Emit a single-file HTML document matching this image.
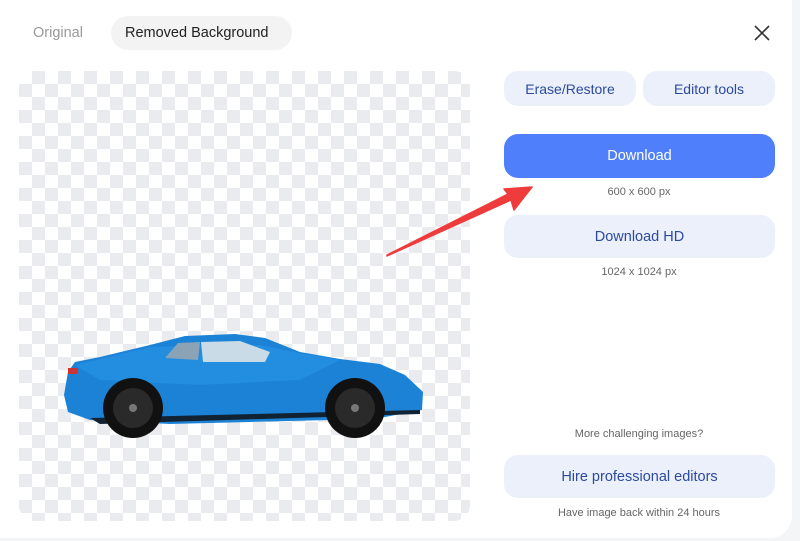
<!DOCTYPE html>
<html><head><style>
*{margin:0;padding:0;box-sizing:border-box}
body{width:800px;height:541px;background:#f4f5f7;font-family:"Liberation Sans",sans-serif;position:relative;overflow:hidden}
.card{position:absolute;left:0;top:0;width:792px;height:538px;background:#fff;border-radius:0 0 22px 0}
.t{position:absolute;font-size:14px}
.img{position:absolute;left:19px;top:71px;width:451px;height:450px;border-radius:16px;overflow:hidden;
background-color:#fff;background-image:linear-gradient(45deg,#e9ebee 25%,transparent 25%,transparent 75%,#e9ebee 75%),linear-gradient(45deg,#e9ebee 25%,transparent 25%,transparent 75%,#e9ebee 75%);background-size:26px 26px;background-position:0 0,13px 13px}
.btn{position:absolute;border-radius:14px;background:#ecf0fb;color:#2b4aa0;font-size:14px;display:flex;align-items:center;justify-content:center}
.s{position:absolute;font-size:11px;color:#666;text-align:center;width:270px;left:504px}
</style></head><body>
<div class="card"></div>
<div class="t" style="left:33px;top:25px;color:#999;font-size:14.5px">Original</div>
<div style="position:absolute;left:111px;top:16px;width:181px;height:34px;border-radius:17px;background:#f3f3f3"></div>
<div class="t" style="left:125px;top:25px;color:#222;font-size:14.5px">Removed Background</div>
<svg style="position:absolute;left:754px;top:25px" width="16" height="16"><path d="M1 1L15 15M15 1L1 15" stroke="#333" stroke-width="1.6"/></svg>
<div class="img">
<svg width="451" height="450" style="position:absolute;left:0;top:0">
<g transform="translate(-19,-71)">
<path d="M68 372 L75 362 L100 357 L150 345 L185 336 L235 334 L265 338 L300 352 L340 359 L380 364 L405 375 L423 392 L422 410 L380 418 L330 420 L170 424 L90 420 L68 412 L64 395Z" fill="#1b82d6"/>
<path d="M75 365 L150 347 L200 345 L260 345 L300 353 L340 360 L300 380 L200 385 L100 380Z" fill="#2a95e6" opacity=".6"/>
<path d="M165 358 L178 343 L200 342 L198 360Z" fill="#8aa3b5"/>
<path d="M201 342 L240 341 L270 352 L265 362 L203 362Z" fill="#c9dbe6"/>
<path d="M90 418 L420 410 L420 414 L100 424Z" fill="#123"/>
<circle cx="133" cy="408" r="30" fill="#111"/><circle cx="133" cy="408" r="20" fill="#2a2a2a"/><circle cx="133" cy="408" r="4" fill="#777"/>
<circle cx="355" cy="408" r="30" fill="#111"/><circle cx="355" cy="408" r="20" fill="#2a2a2a"/><circle cx="355" cy="408" r="4" fill="#777"/>
<rect x="68" y="368" width="10" height="6" fill="#c33"/>
</g></svg>
</div>
<svg style="position:absolute;left:0;top:0" width="800" height="541"><path d="M387 256 L511 200 L514 210 L532 187 L504 189 L508 194 L387 255Z" fill="#ee3b3b" stroke="#ee3b3b" stroke-width="1.5" stroke-linejoin="round"/></svg>
<div class="btn" style="left:504px;top:71px;width:132px;height:35px">Erase/Restore</div>
<div class="btn" style="left:643px;top:71px;width:132px;height:35px">Editor tools</div>
<div class="btn" style="left:504px;top:134px;width:271px;height:44px;background:#4f7ffa;color:#fff;font-size:14.5px">Download</div>
<div class="s" style="top:186px">600 x 600 px</div>
<div class="btn" style="left:504px;top:215px;width:271px;height:43px;font-size:14.5px">Download HD</div>
<div class="s" style="top:266px">1024 x 1024 px</div>
<div class="s" style="top:428px">More challenging images?</div>
<div class="btn" style="left:504px;top:455px;width:271px;height:43px;font-size:14.5px">Hire professional editors</div>
<div class="s" style="top:507px">Have image back within 24 hours</div>
</body></html>
